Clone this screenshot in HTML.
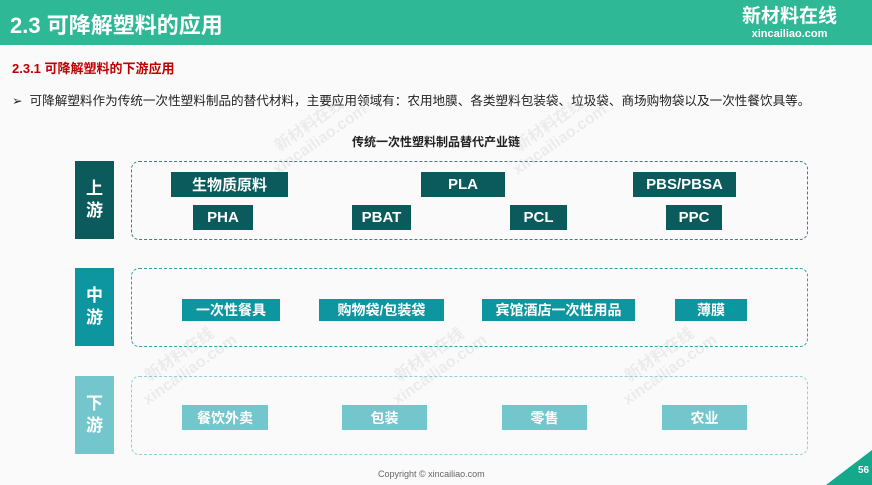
<!DOCTYPE html>
<html><head><meta charset="utf-8"><style>
*{margin:0;padding:0;box-sizing:border-box}
body{width:872px;height:485px;background:#fafafa;position:relative;overflow:hidden;font-family:"Liberation Sans","Noto Sans CJK SC",sans-serif}
.hdr{position:absolute;left:0;top:0;width:872px;height:45px;background:#2fb896}
.hdr h1{position:absolute;left:10px;top:8px;color:#fff;font-size:22px;font-weight:bold}
.logo{position:absolute;left:742px;top:6px;color:#fff;text-align:center;font-weight:bold}
.a{position:absolute;font-weight:bold;color:#fff;display:flex;align-items:center;justify-content:center}
.lab{width:39px;height:78px;flex-direction:column;font-size:17px;line-height:22px}
.box{position:absolute;left:131px;width:677px;height:79px;border:1px dashed;border-radius:8px}
.u{background:#0b5b5c;height:25px;font-size:15px;top:0}
.m{background:#0e96a0;height:22px;font-size:14px}
.d{background:#72c6cc;height:25px;font-size:14px}
.wm{position:absolute;color:rgba(0,0,0,0.06);font-weight:bold;transform:rotate(-35deg);font-size:16px;line-height:18px;text-align:center}
</style></head><body>
<div class="hdr"><h1>2.3 可降解塑料的应用</h1>
<div class="logo"><div style="font-size:19px;line-height:22px">新材料在线</div><div style="font-size:11px;line-height:12px">xincailiao.com</div></div></div>
<div style="position:absolute;left:12px;top:58px;color:#c00000;font-size:13px;font-weight:bold">2.3.1 可降解塑料的下游应用</div>
<div style="position:absolute;left:12px;top:90px;color:#222;font-size:12.6px;white-space:nowrap">➢&nbsp; 可降解塑料作为传统一次性塑料制品的替代材料，主要应用领域有：农用地膜、各类塑料包装袋、垃圾袋、商场购物袋以及一次性餐饮具等。</div>
<div style="position:absolute;left:0;width:872px;top:133px;text-align:center;font-size:12px;font-weight:bold;color:#222">传统一次性塑料制品替代产业链</div>

<div class="wm" style="left:260px;top:115px">新材料在线<br>xincailiao.com</div>
<div class="wm" style="left:500px;top:115px">新材料在线<br>xincailiao.com</div>
<div class="wm" style="left:130px;top:345px">新材料在线<br>xincailiao.com</div>
<div class="wm" style="left:380px;top:345px">新材料在线<br>xincailiao.com</div>
<div class="wm" style="left:610px;top:345px">新材料在线<br>xincailiao.com</div>

<div class="a lab" style="left:75px;top:161px;background:#0b5b5c"><span>上</span><span>游</span></div>
<div class="box" style="top:161px;border-color:#4a7a7c"></div>
<div class="a u" style="left:171px;top:172px;width:117px">生物质原料</div>
<div class="a u" style="left:421px;top:172px;width:84px">PLA</div>
<div class="a u" style="left:633px;top:172px;width:103px">PBS/PBSA</div>
<div class="a u" style="left:193px;top:205px;width:60px">PHA</div>
<div class="a u" style="left:352px;top:205px;width:59px">PBAT</div>
<div class="a u" style="left:510px;top:205px;width:57px">PCL</div>
<div class="a u" style="left:666px;top:205px;width:56px">PPC</div>

<div class="a lab" style="left:75px;top:268px;background:#0e96a0"><span>中</span><span>游</span></div>
<div class="box" style="top:268px;border-color:#2aa2aa"></div>
<div class="a m" style="left:182px;top:299px;width:98px">一次性餐具</div>
<div class="a m" style="left:319px;top:299px;width:125px">购物袋/包装袋</div>
<div class="a m" style="left:482px;top:299px;width:153px">宾馆酒店一次性用品</div>
<div class="a m" style="left:675px;top:299px;width:72px">薄膜</div>

<div class="a lab" style="left:75px;top:376px;background:#72c6cc"><span>下</span><span>游</span></div>
<div class="box" style="top:376px;border-color:#8fd0d4"></div>
<div class="a d" style="left:182px;top:405px;width:86px">餐饮外卖</div>
<div class="a d" style="left:342px;top:405px;width:85px">包装</div>
<div class="a d" style="left:502px;top:405px;width:85px">零售</div>
<div class="a d" style="left:662px;top:405px;width:85px">农业</div>

<div style="position:absolute;left:378px;top:469px;font-size:9px;color:#666">Copyright © xincailiao.com</div>
<svg style="position:absolute;left:826px;top:450px" width="46" height="35"><polygon points="46,0 46,35 0,35" fill="#15a88a"/></svg>
<div style="position:absolute;left:858px;top:465px;font-size:10px;font-weight:bold;color:#fff">56</div>
</body></html>
